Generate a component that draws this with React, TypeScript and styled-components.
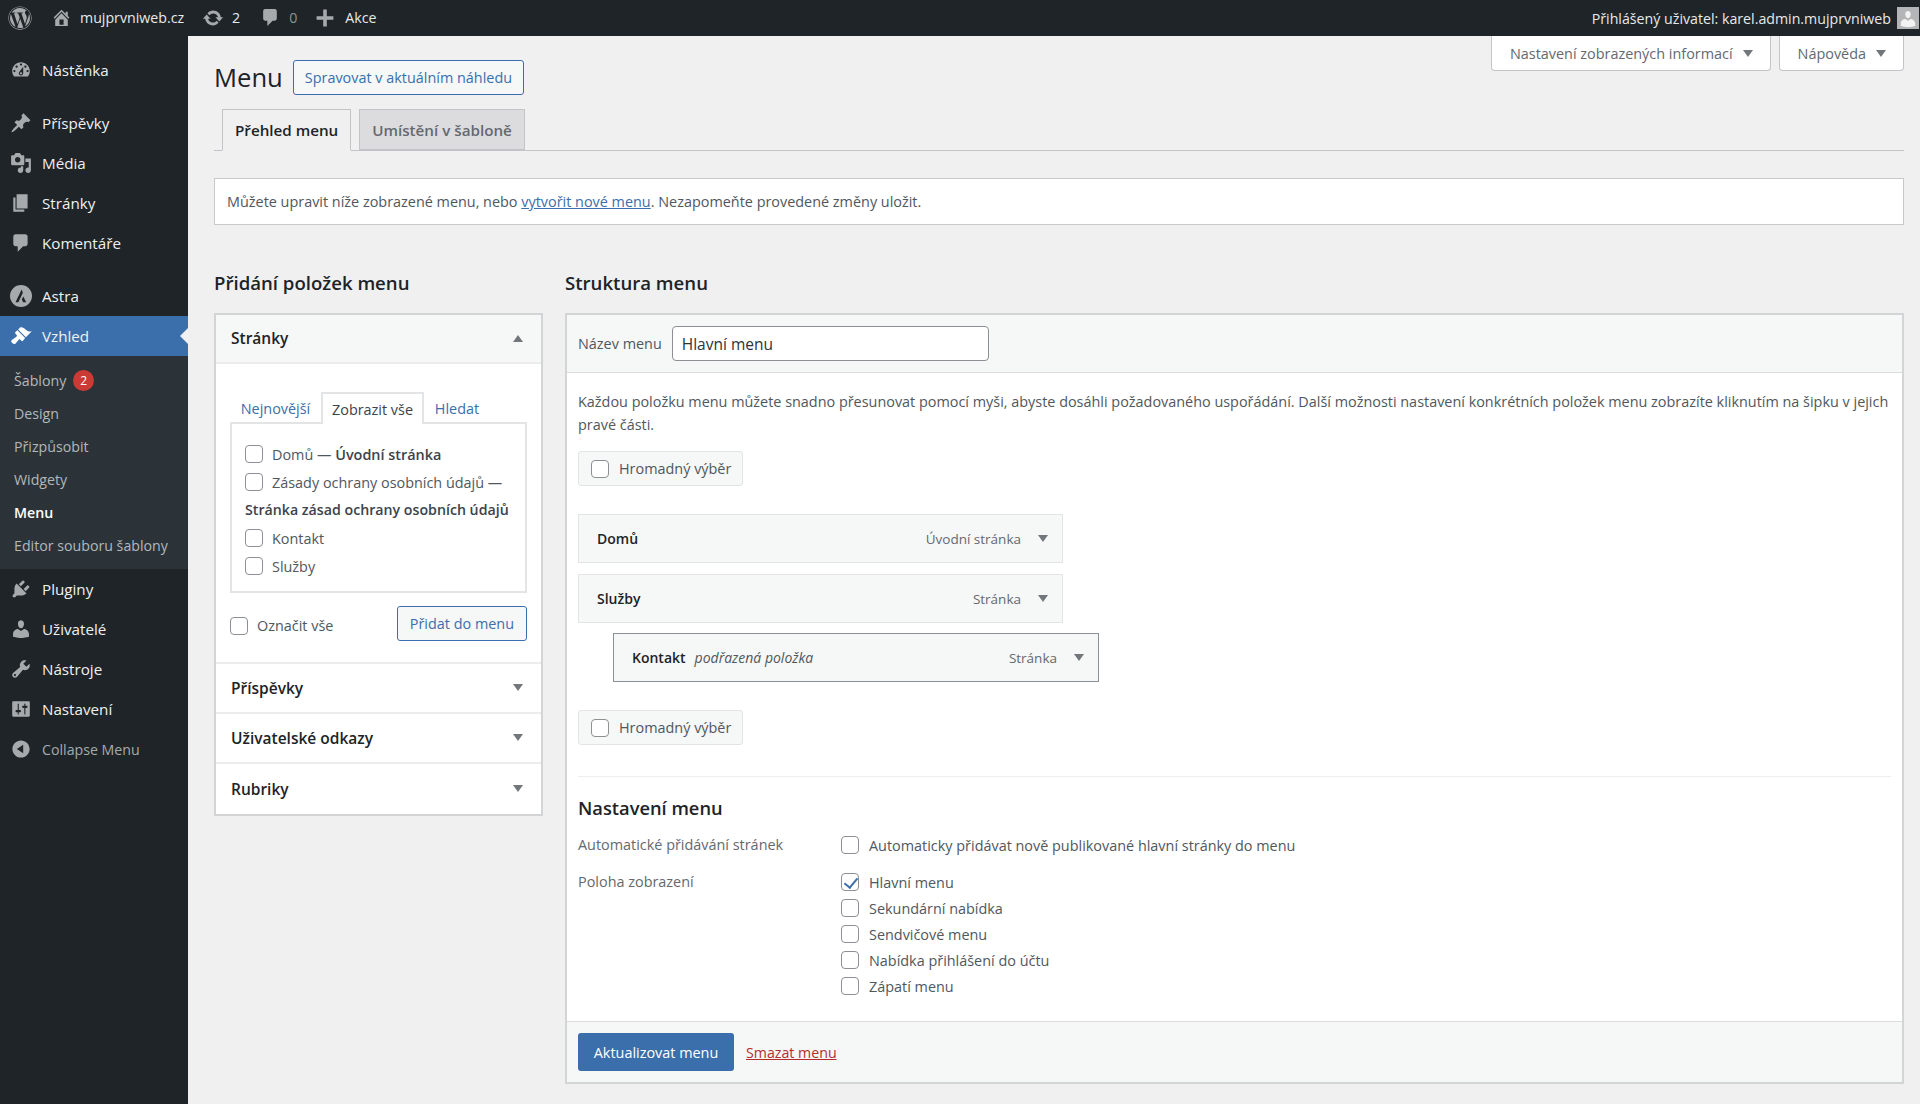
import React from "react";
import styled, { createGlobalStyle } from "styled-components";
import { FaWordpress } from "react-icons/fa";

// ---------- Icons (dashicons paths) ----------
const paths: Record<string, string> = {
  home: "M16 8.5l1.53 1.53-1.06 1.06L10 4.62l-6.47 6.47-1.06-1.06L10 2.5l4 4v-2h2v4zm-6-2.46l6 5.99V18H4v-5.97zM12 17v-5H8v5h4z",
  update:
    "M10.2 3.28c3.53 0 6.43 2.61 6.92 6h2.08l-3.5 4-3.5-4h2.32c-.45-1.97-2.21-3.45-4.32-3.45-1.45 0-2.73.71-3.54 1.78L4.95 5.66C6.23 4.2 8.11 3.28 10.2 3.28zm-.4 13.44c-3.52 0-6.43-2.61-6.92-6H.8l3.5-4c1.17 1.33 2.33 2.67 3.5 4H5.48c.45 1.97 2.21 3.45 4.32 3.45 1.45 0 2.73-.71 3.54-1.78l1.71 1.95c-1.28 1.46-3.15 2.38-5.25 2.38z",
  comment: "M5 2h9c1.1 0 2 .9 2 2v7c0 1.1-.9 2-2 2h-2l-5 5v-5H5c-1.1 0-2-.9-2-2V4c0-1.1.9-2 2-2z",
  plus: "M17 8.5v3h-5.5V17h-3v-5.5H3v-3h5.5V3h3v5.5H17z",
  dashboard:
    "M3.76 16h12.48c1.1-1.37 1.76-3.11 1.76-5 0-4.42-3.58-8-8-8s-8 3.58-8 8c0 1.89.66 3.63 1.76 5zM10 4c.55 0 1 .45 1 1s-.45 1-1 1-1-.45-1-1 .45-1 1-1zM6 6c.55 0 1 .45 1 1s-.45 1-1 1-1-.45-1-1 .45-1 1-1zm8 0c.55 0 1 .45 1 1s-.45 1-1 1-1-.45-1-1 .45-1 1-1zm-5.37 5.55L12 7v6c0 1.1-.9 2-2 2s-2-.9-2-2c0-.57.24-1.08.63-1.45zM4 10c.55 0 1 .45 1 1s-.45 1-1 1-1-.45-1-1 .45-1 1-1zm12 0c.55 0 1 .45 1 1s-.45 1-1 1-1-.45-1-1 .45-1 1-1zm-5 3c0-.55-.45-1-1-1s-1 .45-1 1 .45 1 1 1 1-.45 1-1z",
  pin: "M10.44 3.02l1.82-1.82 6.36 6.35-1.83 1.82c-1.05-.68-2.48-.57-3.41.36l-.75.75c-.92.93-1.04 2.35-.35 3.41l-1.83 1.82-2.41-2.41-2.8 2.79c-.42.42-3.38 2.71-3.8 2.29s1.86-3.39 2.28-3.81l2.79-2.79L4.1 9.36l1.83-1.82c1.05.69 2.48.57 3.41-.36l.75-.75c.93-.92 1.04-2.35.35-3.41z",
  media:
    "M13 11V4c0-.55-.45-1-1-1h-1.67L9 1H5L3.67 3H2c-.55 0-1 .45-1 1v7c0 .55.45 1 1 1h10c.55 0 1-.45 1-1zM7 4.5c1.38 0 2.5 1.12 2.5 2.5S8.38 9.5 7 9.5 4.5 8.38 4.5 7 5.62 4.5 7 4.5zM14 6h5v10.5c0 1.38-1.12 2.5-2.5 2.5S14 17.88 14 16.5s1.12-2.5 2.5-2.5c.17 0 .34.02.5.05V9h-3V6zm-4 8.05V13h2v3.5c0 1.38-1.12 2.5-2.5 2.5S7 17.88 7 16.5 8.12 14 9.5 14c.17 0 .34.02.5.05z",
  page: "M6 15V2h10v13H6zm-1 1h8v2H3V5h2v11z",
  appearance:
    "M14.48 11.06L7.41 3.99l1.5-1.5c.5-.56 2.3-.47 3.51.32 1.21.8 1.43 1.28 2.91 2.1 1.18.64 2.45 1.26 4.45.85zm-.71.71L6.7 4.7 4.93 6.47c-.39.39-.39 1.02 0 1.41l1.06 1.06c.39.39.39 1.03 0 1.42-.6.6-1.43 1.11-2.21 1.69-.35.26-.7.53-1.01.84C1.43 13.23.4 14.67 2.02 16.29c1.62 1.62 3.07.58 3.37.27.31-.31.58-.66.84-1.01.58-.78 1.09-1.61 1.69-2.21.39-.39 1.02-.39 1.41 0l1.06 1.06c.39.39 1.02.39 1.41 0z",
  plugins:
    "M13.11 4.36L9.87 7.6 8 5.73l3.24-3.24c.35-.34 1.05-.2 1.56.32.52.51.66 1.21.31 1.55zm-8 1.77l.91-1.12 9.01 9.01-1.19.84c-.71.71-2.63 1.16-3.82 1.16H6.14L4.9 17.26c-.59.59-1.54.59-2.12 0-.59-.58-.59-1.53 0-2.12l1.24-1.24v-3.88c0-1.13.4-3.19 1.09-3.89zm7.26 3.97l3.24-3.24c.34-.35 1.04-.21 1.55.31.52.51.66 1.21.31 1.55l-3.24 3.25z",
  users:
    "M10 9.25c-2.27 0-2.73-3.44-2.73-3.44C7 4.02 7.82 2 9.97 2c2.16 0 2.98 2.02 2.71 3.81 0 0-.41 3.44-2.68 3.44zm0 2.57L12.72 10c2.39 0 4.52 2.33 4.52 4.53v2.49s-3.65 1.13-7.24 1.13c-3.65 0-7.24-1.13-7.24-1.13v-2.49c0-2.25 1.94-4.48 4.47-4.48z",
  tools:
    "M16.68 9.77c-1.34 1.34-3.3 1.67-4.95.99l-5.41 6.52c-.99.99-2.59.99-3.58 0s-.99-2.59 0-3.57l6.52-5.42c-.68-1.65-.35-3.61.99-4.95 1.28-1.28 3.12-1.62 4.72-1.06l-2.89 2.89 2.82 2.82 2.86-2.87c.53 1.58.18 3.39-1.08 4.65zM3.81 16.21c.4.39 1.04.39 1.43 0 .4-.4.4-1.04 0-1.43-.39-.4-1.03-.4-1.43 0-.39.39-.39 1.03 0 1.43z",
  settings:
    "M18 16V4c0-.55-.45-1-1-1H3c-.55 0-1 .45-1 1v12c0 .55.45 1 1 1h14c.55 0 1-.45 1-1zM8 11h1c.55 0 1 .45 1 1s-.45 1-1 1H8v1.5c0 .28-.22.5-.5.5s-.5-.22-.5-.5V13H6c-.55 0-1-.45-1-1s.45-1 1-1h1V5.5c0-.28.22-.5.5-.5s.5.22.5.5V11zm5-2h-1c-.55 0-1-.45-1-1s.45-1 1-1h1V5.5c0-.28.22-.5.5-.5s.5.22.5.5V7h1c.55 0 1 .45 1 1s-.45 1-1 1h-1v5.5c0 .28-.22.5-.5.5s-.5-.22-.5-.5V9z",
  collapse: "M10 2.16c4.33 0 7.84 3.51 7.84 7.84s-3.51 7.84-7.84 7.84S2.16 14.33 2.16 10 5.71 2.16 10 2.16zm2 11.72V6.12L6.18 9.97z",
  astra: "M10 0a10 10 0 1 0 0 20 10 10 0 0 0 0-20zm.6 4.2L5 15.6h2.6l4.1-8.6-1.1-2.8zm1.5 6.3l-1.4 2.7 1.3 2.4h2.7l-2.6-5.1z",
};

const Dash: React.FC<{ name: string; size?: number; color?: string }> = ({ name, size = 22, color = "#a7aaad" }) => (
  <svg width={size} height={size} viewBox="0 0 20 20" fill={color} fillRule="evenodd">
    <path d={paths[name]} />
  </svg>
);

// ---------- Styled Components ----------
const Global = createGlobalStyle`
  html, body {
    margin: 0;
    background: #f0f0f1;
    font-family: "Open Sans", "Noto Sans", sans-serif;
    font-size: 14.42px;
    color: #50575e;
  }
  * { box-sizing: border-box; }
  a { color: #3a6fab; }
`;

const AdminBar = styled.header`
  height: 36px;
  background: #1e2428;
  color: #e8e9ea;
  display: flex;
  align-items: center;
  padding: 0 1px 0 8px;
  font-size: 14.2px;
`;

const BarItem = styled.div<{ $ml?: number; $muted?: boolean }>`
  display: flex;
  align-items: center;
  gap: 8px;
  line-height: 18px;
  padding-bottom: 1px;
  margin-left: ${(p) => p.$ml ?? 0}px;
  color: ${(p) => (p.$muted ? "#8f9396" : "#e8e9ea")};
`;

const BarRight = styled.div`
  margin-left: auto;
  display: flex;
  align-items: center;
  gap: 6px;
`;

const Avatar = styled.div`
  width: 22px;
  height: 22px;
  background: #b4b5b6;
  display: flex;
  align-items: flex-end;
  justify-content: center;
`;

const Layout = styled.div`
  display: flex;
  min-height: 1068px;
`;

const Sidebar = styled.nav`
  width: 188px;
  flex: none;
  background: #1e2428;
  padding-top: 14px;
`;

const MenuItem = styled.div<{ $active?: boolean; $muted?: boolean; $gap?: number }>`
  height: 40px;
  position: relative;
  display: flex;
  align-items: center;
  gap: 10px;
  padding-left: 10px;
  margin-top: ${(p) => p.$gap ?? 0}px;
  color: ${(p) => (p.$muted ? "#a7aaad" : "#f0f0f1")};
  background: ${(p) => (p.$active ? "#3a6fab" : "transparent")};
  font-size: ${(p) => (p.$muted ? "14.2px" : "15.2px")};

  ${(p) =>
    p.$active &&
    `&::after {
      content: "";
      position: absolute;
      right: 0;
      top: 12px;
      border: 8px solid transparent;
      border-right-color: #f0f0f1;
      border-left-width: 0;
    }`}
`;

const SubMenu = styled.div`
  background: #2c3338;
  padding: 8px 0 7px;
`;

const SubItem = styled.div<{ $current?: boolean }>`
  height: 33px;
  display: flex;
  align-items: center;
  gap: 7px;
  padding-left: 14px;
  font-size: 14.2px;
  color: ${(p) => (p.$current ? "#fff" : "#b3b7ba")};
  font-weight: ${(p) => (p.$current ? 600 : 400)};
`;

const Badge = styled.span`
  width: 21px;
  height: 21px;
  border-radius: 50%;
  background: #cc3a36;
  color: #fff;
  font-size: 12px;
  display: flex;
  align-items: center;
  justify-content: center;
`;

const Main = styled.main`
  flex: 1;
  padding: 0 16px 20px 26px;
  min-width: 0;
`;

const ScreenBar = styled.div`
  height: 24px;
  display: flex;
  justify-content: flex-end;
  align-items: flex-start;
  gap: 8px;
`;

const ScreenTab = styled.div`
  height: 35px;
  background: #fff;
  border: 1px solid #c3c4c7;
  border-top: 0;
  border-radius: 0 0 4px 4px;
  padding: 0 17px 0 18px;
  display: flex;
  align-items: center;
  gap: 10px;
  color: #646970;
  position: relative;
`;

const Arrow = styled.span<{ $up?: boolean }>`
  width: 0;
  height: 0;
  flex: none;
  border-left: 5px solid transparent;
  border-right: 5px solid transparent;
  ${(p) => (p.$up ? "border-bottom" : "border-top")}: 7px solid #72777c;
`;

const TitleRow = styled.div`
  height: 35px;
  display: flex;
  align-items: center;
  gap: 10px;
`;

const PageTitle = styled.h1`
  margin: 0;
  font-size: 25.6px;
  font-weight: 400;
  color: #1d2327;
`;

const OutlineButton = styled.button`
  height: 35px;
  padding: 0 11px;
  font: inherit;
  color: #3a6fab;
  background: #f6f7f7;
  border: 1.5px solid #3a6fab;
  border-radius: 3px;
`;

const NavTabs = styled.div`
  margin-top: 14px;
  height: 42px;
  padding-left: 8px;
  display: flex;
  gap: 8px;
  border-bottom: 1px solid #c3c4c7;
`;

const NavTab = styled.div<{ $active?: boolean }>`
  height: 42px;
  padding: 0 12px;
  display: flex;
  align-items: center;
  font-size: 15.2px;
  font-weight: 600;
  border: 1.5px solid #c3c4c7;
  ${(p) =>
    p.$active
      ? "background: #f0f0f1; color: #1d2327; border-bottom-color: #f0f0f1;"
      : "background: #dcdcde; color: #646970; height: 41px;"}
`;

const Notice = styled.div`
  margin-top: 27px;
  height: 47px;
  padding: 0 12px;
  background: #fff;
  border: 1.5px solid #c8c9cb;
  display: flex;
  align-items: center;
  white-space: pre;
`;

const Columns = styled.div`
  margin-top: 44px;
  display: grid;
  grid-template-columns: 329px 1fr;
  column-gap: 22px;
`;

const ColTitle = styled.h2`
  margin: 0 0 16px;
  height: 28px;
  line-height: 28px;
  font-size: 18.6px;
  font-weight: 600;
  color: #1d2327;
`;

const Accordion = styled.div`
  background: #fff;
  border: 2px solid #d3d4d6;
`;

const AccHead = styled.div<{ $open?: boolean }>`
  height: ${(p) => (p.$open ? "49px" : "50px")};
  padding: 0 18px 1px 15px;
  display: flex;
  align-items: center;
  justify-content: space-between;
  font-size: 15.5px;
  font-weight: 600;
  color: #1d2327;
  background: ${(p) => (p.$open ? "#f6f7f7" : "#fff")};
  border-bottom: 2px solid #ececed;
  &:last-child { border-bottom: 0; }
`;

const AccBody = styled.div`
  padding: 30px 14px 0;
  height: 300px;
  border-bottom: 2px solid #ececed;
`;

const PaneTabs = styled.div`
  height: 30px;
  display: flex;
  align-items: flex-end;
  margin-bottom: -2px;
  position: relative;
`;

const PaneTab = styled.div<{ $active?: boolean; $w?: number }>`
  height: 32px;
  width: ${(p) => p.$w}px;
  display: flex;
  align-items: center;
  justify-content: center;
  color: ${(p) => (p.$active ? "#3c434a" : "#3a6fab")};
  ${(p) => p.$active && "background: #fff; border: 2px solid #e3e4e5; border-bottom: 0;"}
`;

const PaneBox = styled.div`
  height: 171px;
  padding: 16px 11px 0 13px;
  border: 2px solid #e3e4e5;
`;

const PageRow = styled.label`
  height: 28px;
  display: flex;
  align-items: center;
  gap: 9px;
  white-space: nowrap;
  b { font-weight: 600; color: #3c434a; }
`;

const BoldRow = styled.div`
  height: 28px;
  line-height: 28px;
  font-size: 14.2px;
  font-weight: 600;
  color: #3c434a;
  white-space: nowrap;
`;

const PaneFooter = styled.div`
  margin-top: 13px;
  display: flex;
  align-items: center;
  justify-content: space-between;

  button { padding: 0 12px; }
`;

const Check = styled.input.attrs({ type: "checkbox", readOnly: true })`
  appearance: none;
  margin: 0;
  width: 18px;
  height: 18px;
  flex: none;
  background: #fff;
  border: 1.5px solid #8c8f94;
  border-radius: 4px;
  position: relative;

  &:checked::before {
    content: "";
    position: absolute;
    left: 4.5px;
    top: 0.5px;
    width: 6px;
    height: 11px;
    border: solid #3a6fab;
    border-width: 0 2.5px 2.5px 0;
    transform: rotate(40deg);
  }
`;

const CheckLabel = styled.label`
  display: flex;
  align-items: center;
  gap: 9px;
  margin-top: 4px;
`;

const Panel = styled.div`
  background: #fff;
  border: 2px solid #d3d4d6;
`;

const PanelHead = styled.div`
  height: 58px;
  padding: 0 11px;
  background: #f6f7f7;
  border-bottom: 1.5px solid #dcdcde;
  display: flex;
  align-items: center;
  gap: 10px;
`;

const NameInput = styled.input`
  width: 317px;
  height: 35px;
  padding: 0 9px;
  font: inherit;
  font-size: 15.5px;
  color: #2c3338;
  border: 1.5px solid #8c8f94;
  border-radius: 4px;
`;

const PanelBody = styled.div`
  padding: 17px 11px 0;
`;

const Help = styled.p`
  margin: 0;
  line-height: 23px;
  color: #50575e;
`;

const BulkBox = styled.label<{ $mt: number }>`
  margin-top: ${(p) => p.$mt}px;
  width: 165px;
  height: 35px;
  padding: 0 12px;
  display: flex;
  align-items: center;
  gap: 10px;
  white-space: nowrap;
  background: #f6f7f7;
  border: 1.5px solid #e3e4e5;
  border-radius: 3px;
`;

const MenuRow = styled.div<{ $child?: boolean; $mt: number }>`
  margin-top: ${(p) => p.$mt}px;
  margin-left: ${(p) => (p.$child ? 35 : 0)}px;
  width: ${(p) => (p.$child ? 486 : 485)}px;
  height: 49px;
  padding: 0 14px 0 18px;
  display: flex;
  align-items: center;
  background: #f6f7f7;
  border: ${(p) => (p.$child ? "1.5px solid #8c8f94" : "1.5px solid #e3e4e5")};
  font-size: 14px;
`;

const RowName = styled.b`
  font-weight: 600;
  color: #1d2327;
`;

const RowSub = styled.i`
  margin-left: 9px;
  color: #50575e;
`;

const RowType = styled.span`
  margin-left: auto;
  margin-right: 17px;
  color: #646970;
  font-size: 13.5px;
`;

const Rule = styled.hr`
  margin: 31px 0 0;
  border: 0;
  border-top: 1.5px solid #eeeeef;
`;

const SettingsTitle = styled.h3`
  margin: 19px 0 0;
  height: 24px;
  line-height: 24px;
  font-size: 18.3px;
  font-weight: 600;
  color: #1d2327;
`;

const SettingRow = styled.div<{ $mt: number }>`
  margin-top: ${(p) => p.$mt}px;
  display: grid;
  grid-template-columns: 263px 1fr;
`;

const SettingName = styled.div`
  line-height: 26px;
  color: #646970;
`;

const OptionList = styled.div`
  display: flex;
  flex-direction: column;
`;

const Option = styled.label`
  height: 26px;
  display: flex;
  align-items: center;
  gap: 10px;
`;

const PanelFoot = styled.div`
  margin-top: 22px;
  height: 61px;
  padding: 0 11px;
  background: #f6f7f7;
  border-top: 1.5px solid #dcdcde;
  display: flex;
  align-items: center;
  gap: 12px;
`;

const Primary = styled.button`
  height: 38px;
  width: 156px;
  font: inherit;
  color: #fff;
  background: #3a6fab;
  border: 0;
  border-radius: 3px;
`;

const DangerLink = styled.a`
  color: #b32d2e;
  text-decoration: underline;
  font-size: 14.2px;
`;

// ---------- Data ----------
const menuA = [
  { icon: "pin", label: "Příspěvky" },
  { icon: "media", label: "Média" },
  { icon: "page", label: "Stránky" },
  { icon: "comment", label: "Komentáře" },
];
const menuB = [
  { icon: "plugins", label: "Pluginy" },
  { icon: "users", label: "Uživatelé" },
  { icon: "tools", label: "Nástroje" },
  { icon: "settings", label: "Nastavení" },
];
const locations = ["Sekundární nabídka", "Sendvičové menu", "Nabídka přihlášení do účtu", "Zápatí menu"];

// ---------- Component ----------
const App: React.FC = () => (
  <>
    <Global />
    <AdminBar>
      <FaWordpress size={24} color="#a7aaad" />
      <BarItem $ml={19}>
        <Dash name="home" size={21} />
        mujprvniweb.cz
      </BarItem>
      <BarItem $ml={18}>
        <Dash name="update" size={22} />2
      </BarItem>
      <BarItem $ml={20} $muted>
        <Dash name="comment" size={21} />0
      </BarItem>
      <BarItem $ml={16}>
        <Dash name="plus" size={24} />
        Akce
      </BarItem>
      <BarRight>
        Přihlášený uživatel: karel.admin.mujprvniweb
        <Avatar>
          <svg width="20" height="20" viewBox="0 0 20 20" fill="#f2f2f2">
            <path d={paths.users} />
          </svg>
        </Avatar>
      </BarRight>
    </AdminBar>
    <Layout>
      <Sidebar>
        <MenuItem>
          <Dash name="dashboard" />
          Nástěnka
        </MenuItem>
        {menuA.map((m, i) => (
          <MenuItem key={m.label} $gap={i === 0 ? 13 : 0}>
            <Dash name={m.icon} />
            {m.label}
          </MenuItem>
        ))}
        <MenuItem $gap={13}>
          <Dash name="astra" />
          Astra
        </MenuItem>
        <MenuItem $active>
          <Dash name="appearance" color="#fff" />
          Vzhled
        </MenuItem>
        <SubMenu>
          <SubItem>
            Šablony <Badge>2</Badge>
          </SubItem>
          <SubItem>Design</SubItem>
          <SubItem>Přizpůsobit</SubItem>
          <SubItem>Widgety</SubItem>
          <SubItem $current>Menu</SubItem>
          <SubItem>Editor souboru šablony</SubItem>
        </SubMenu>
        {menuB.map((m) => (
          <MenuItem key={m.label}>
            <Dash name={m.icon} />
            {m.label}
          </MenuItem>
        ))}
        <MenuItem $muted>
          <Dash name="collapse" />
          Collapse Menu
        </MenuItem>
      </Sidebar>
      <Main>
        <ScreenBar>
          <ScreenTab>
            Nastavení zobrazených informací <Arrow />
          </ScreenTab>
          <ScreenTab>
            Nápověda <Arrow />
          </ScreenTab>
        </ScreenBar>
        <TitleRow>
          <PageTitle>Menu</PageTitle>
          <OutlineButton>Spravovat v aktuálním náhledu</OutlineButton>
        </TitleRow>
        <NavTabs>
          <NavTab $active>Přehled menu</NavTab>
          <NavTab>Umístění v šabloně</NavTab>
        </NavTabs>
        <Notice>
          Můžete upravit níže zobrazené menu, nebo <a href="#new">vytvořit nové menu</a>. Nezapomeňte provedené změny
          uložit.
        </Notice>
        <Columns>
          <div>
            <ColTitle>Přidání položek menu</ColTitle>
            <Accordion>
              <AccHead $open>
                Stránky <Arrow $up />
              </AccHead>
              <AccBody>
                <PaneTabs>
                  <PaneTab $w={91}>Nejnovější</PaneTab>
                  <PaneTab $w={103} $active>
                    Zobrazit vše
                  </PaneTab>
                  <PaneTab $w={66}>Hledat</PaneTab>
                </PaneTabs>
                <PaneBox>
                  <PageRow>
                    <Check />
                    <span>
                      Domů — <b>Úvodní stránka</b>
                    </span>
                  </PageRow>
                  <PageRow>
                    <Check />
                    Zásady ochrany osobních údajů —
                  </PageRow>
                  <BoldRow>Stránka zásad ochrany osobních údajů</BoldRow>
                  <PageRow>
                    <Check />
                    Kontakt
                  </PageRow>
                  <PageRow>
                    <Check />
                    Služby
                  </PageRow>
                </PaneBox>
                <PaneFooter>
                  <CheckLabel>
                    <Check />
                    Označit vše
                  </CheckLabel>
                  <OutlineButton>Přidat do menu</OutlineButton>
                </PaneFooter>
              </AccBody>
              <AccHead>
                Příspěvky <Arrow />
              </AccHead>
              <AccHead>
                Uživatelské odkazy <Arrow />
              </AccHead>
              <AccHead>
                Rubriky <Arrow />
              </AccHead>
            </Accordion>
          </div>
          <div>
            <ColTitle>Struktura menu</ColTitle>
            <Panel>
              <PanelHead>
                Název menu
                <NameInput defaultValue="Hlavní menu" />
              </PanelHead>
              <PanelBody>
                <Help>
                  Každou položku menu můžete snadno přesunovat pomocí myši, abyste dosáhli požadovaného uspořádání. Další
                  možnosti nastavení konkrétních položek menu zobrazíte kliknutím na šipku v jejich pravé části.
                </Help>
                <BulkBox $mt={15}>
                  <Check />
                  Hromadný výběr
                </BulkBox>
                <MenuRow $mt={28}>
                  <RowName>Domů</RowName>
                  <RowType>Úvodní stránka</RowType>
                  <Arrow />
                </MenuRow>
                <MenuRow $mt={11}>
                  <RowName>Služby</RowName>
                  <RowType>Stránka</RowType>
                  <Arrow />
                </MenuRow>
                <MenuRow $mt={10} $child>
                  <RowName>Kontakt</RowName>
                  <RowSub>podřazená položka</RowSub>
                  <RowType>Stránka</RowType>
                  <Arrow />
                </MenuRow>
                <BulkBox $mt={28}>
                  <Check />
                  Hromadný výběr
                </BulkBox>
                <Rule />
                <SettingsTitle>Nastavení menu</SettingsTitle>
                <SettingRow $mt={12}>
                  <SettingName>Automatické přidávání stránek</SettingName>
                  <Option>
                    <Check />
                    Automaticky přidávat nově publikované hlavní stránky do menu
                  </Option>
                </SettingRow>
                <SettingRow $mt={11}>
                  <SettingName>Poloha zobrazení</SettingName>
                  <OptionList>
                    <Option>
                      <Check defaultChecked />
                      Hlavní menu
                    </Option>
                    {locations.map((l) => (
                      <Option key={l}>
                        <Check />
                        {l}
                      </Option>
                    ))}
                  </OptionList>
                </SettingRow>
              </PanelBody>
              <PanelFoot>
                <Primary>Aktualizovat menu</Primary>
                <DangerLink href="#delete">Smazat menu</DangerLink>
              </PanelFoot>
            </Panel>
          </div>
        </Columns>
      </Main>
    </Layout>
  </>
);

export default App;
